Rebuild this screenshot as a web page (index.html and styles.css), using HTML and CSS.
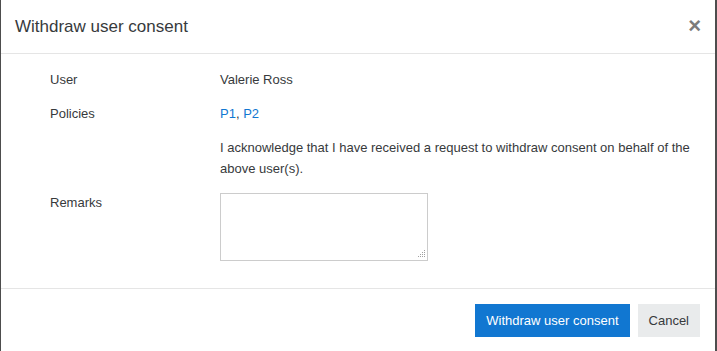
FILE: index.html
```html
<!DOCTYPE html>
<html>
<head>
<meta charset="utf-8">
<link rel="stylesheet" href="styles.css">
</head>
<body>
<div class="modal">
  <div class="modal-header">
    <h5 class="modal-title">Withdraw user consent</h5>
    <button class="close" aria-label="Close">&times;</button>
  </div>
  <div class="modal-body">
    <div class="row">
      <div class="label">User</div>
      <div class="value">Valerie Ross</div>
    </div>
    <div class="row">
      <div class="label">Policies</div>
      <div class="value"><a href="#">P1</a>, <a href="#">P2</a></div>
    </div>
    <div class="row ack">
      <div class="label"></div>
      <div class="value">I acknowledge that I have received a request to withdraw consent on behalf of the above user(s).</div>
    </div>
    <div class="row remarks">
      <div class="label">Remarks</div>
      <div class="value">
        <div class="textarea-wrap">
          <textarea class="textarea"></textarea>
          <svg class="grip" width="9" height="9" viewBox="0 0 9 9" aria-hidden="true">
            <g fill="#a0a0a0">
              <rect x="7" y="0" width="1" height="1"/>
              <rect x="5" y="2" width="1" height="1"/>
              <rect x="7" y="2" width="1" height="1"/>
              <rect x="3" y="4" width="1" height="1"/>
              <rect x="5" y="4" width="1" height="1"/>
              <rect x="7" y="4" width="1" height="1"/>
              <rect x="1" y="6" width="1" height="1"/>
              <rect x="3" y="6" width="1" height="1"/>
              <rect x="5" y="6" width="1" height="1"/>
              <rect x="7" y="6" width="1" height="1"/>
            </g>
          </svg>
        </div>
      </div>
    </div>
  </div>
  <div class="modal-footer">
    <button class="btn btn-primary">Withdraw user consent</button>
    <button class="btn btn-secondary">Cancel</button>
  </div>
</div>
</body>
</html>
```
FILE: styles.css
```css
html, body {
  margin: 0;
  padding: 0;
  height: 100%;
}
body {
  background: #4d4d4d;
  font-family: "Liberation Sans", Arial, sans-serif;
  font-size: 13px;
  line-height: 21px;
  color: #373a3c;
  padding-left: 1px;
  padding-right: 2px;
  box-sizing: border-box;
  overflow: hidden;
}
.modal {
  background: #fff;
  height: 100%;
  width: 714px;
}
.modal-header {
  display: flex;
  align-items: center;
  justify-content: space-between;
  height: 54px;
  box-sizing: border-box;
  padding: 0 15px 0 14px;
  border-bottom: 1px solid #e5e5e5;
}
.modal-title {
  margin: 0;
  font-size: 17px;
  font-weight: normal;
  color: #373a3c;
  line-height: 24px;
}
.close {
  border: 0;
  background: none;
  padding: 0;
  font-family: "Liberation Sans", Arial, sans-serif;
  font-size: 22px;
  font-weight: bold;
  color: #7b7b7b;
  line-height: 20px;
  margin-right: -1px;
  margin-top: -1px;
  cursor: pointer;
}
.modal-body {
  padding: 15px 15px 27px 49px;
  border-bottom: 1px solid #e5e5e5;
}
.row {
  display: flex;
  margin-bottom: 13px;
}
.row.ack {
  margin-top: 1px;
  margin-bottom: 13px;
}
.row.remarks {
  margin-bottom: 0;
}
.label {
  width: 170px;
  flex: none;
}
.value {
  flex: 1;
}
.remarks .value {
  padding-top: 1px;
}
a {
  color: #1177d1;
  text-decoration: none;
}
.textarea-wrap {
  position: relative;
  width: 208px;
}
.textarea {
  display: block;
  width: 208px;
  height: 68px;
  box-sizing: border-box;
  border: 1px solid #ccc;
  margin: 0;
  padding: 4px;
  font-family: inherit;
  font-size: 13px;
  resize: none;
}
.grip {
  position: absolute;
  right: 2px;
  bottom: 2px;
}
.modal-footer {
  display: flex;
  justify-content: flex-end;
  gap: 8px;
  padding: 15px 15px;
}
.btn {
  height: 33px;
  border: 0;
  font-family: "Liberation Sans", Arial, sans-serif;
  font-size: 13px;
  padding: 0 11px;
  margin: 0;
  cursor: pointer;
}
.btn-primary {
  background: #1177d1;
  color: #fff;
}
.btn-secondary {
  background: #e9ebec;
  color: #373a3c;
}
```
